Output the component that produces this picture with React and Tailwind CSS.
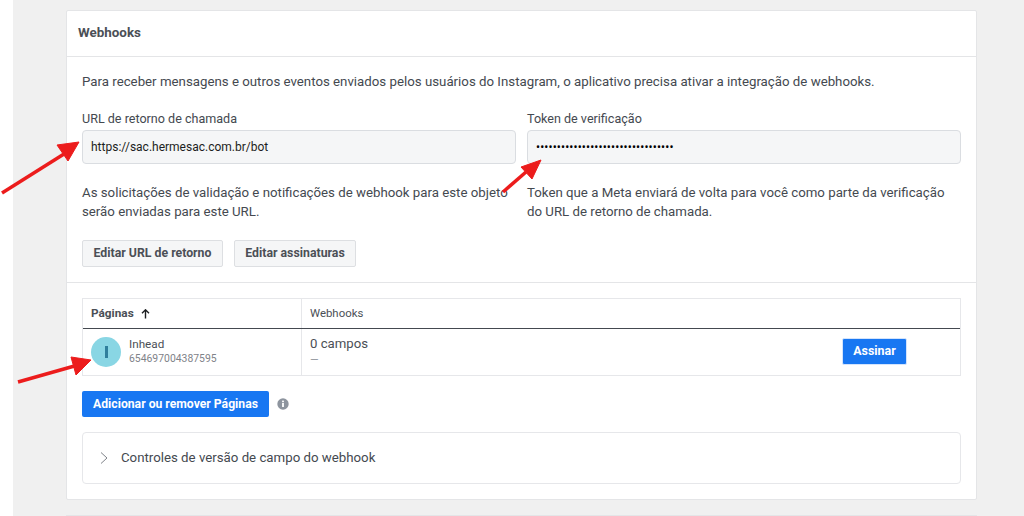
export default function App() {
  return (
    <div className="relative h-[516px] w-[1024px] overflow-hidden bg-white font-['Roboto',sans-serif]">
      <div className="ml-[13px] h-[516px] bg-[#f0f0f0] pl-[53px] pr-[47px] pt-[10px]">
        <div className="h-[490px] rounded-[2px] border border-[#e4e5e7] bg-white">
          <div className="flex h-[46px] items-center border-b border-[#e4e5e7] pb-[1px] pl-[11px] text-[13.4px] font-bold text-[#4b4f56]">Webhooks</div>
          <div className="px-[15px]">
            <p className="mt-[16px] text-[13.27px] leading-[18px] text-[#444950]">Para receber mensagens e outros eventos enviados pelos usuários do Instagram, o aplicativo precisa ativar a integração de webhooks.</p>
            <div className="mt-[19px] grid grid-cols-[434px_434px] gap-x-[11px]">
              <div>
                <label className="block text-[12.57px] leading-[18px] text-[#444950]">URL de retorno de chamada</label>
                <div className="mt-[2px] flex h-[34px] items-center rounded-[4px] border border-[#dadde1] bg-[#f5f6f7] pl-[8px] text-[12px] text-[#1c1e21]">https://sac.hermesac.com.br/bot</div>
                <p className="mt-[19px] text-[13.25px] leading-[19px] text-[#444950]">As solicitações de validação e notificações de webhook para este objeto<br />serão enviadas para este URL.</p>
              </div>
              <div>
                <label className="block text-[12.57px] leading-[18px] text-[#444950]">Token de verificação</label>
                <div className="mt-[2px] flex h-[34px] items-center rounded-[4px] border border-[#dadde1] bg-[#f5f6f7] pl-[8px] text-[12px] tracking-[0.12px] text-black">•••••••••••••••••••••••••••••••••</div>
                <p className="mt-[19px] text-[13.25px] leading-[19px] text-[#444950]">Token que a Meta enviará de volta para você como parte da verificação<br />do URL de retorno de chamada.</p>
              </div>
            </div>
            <div className="mt-[19px] flex gap-[11px]">
              <button className="h-[27px] w-[141px] rounded-[2px] border border-[#dddfe2] bg-[#f5f6f7] text-[12.3px] font-bold text-[#4b4f56]">Editar URL de retorno</button>
              <button className="h-[27px] w-[122px] rounded-[2px] border border-[#dddfe2] bg-[#f5f6f7] text-[12.3px] font-bold text-[#4b4f56]">Editar assinaturas</button>
            </div>
          </div>
          <div className="mt-[15px] border-t border-[#e4e5e7] px-[15px] pt-[15px]">
            <div className="h-[78px] border border-[#e6e7ea]">
              <div className="flex h-[30px] border-b-[1px] border-[#444950]">
                <div className="flex w-[219px] items-center gap-[7px] border-r border-[#e6e7ea] pl-[8px] text-[11.8px] font-bold text-[#4b4f56]">
                  Páginas
                  <svg width="9" height="10" viewBox="0 0 9 10" fill="none" stroke="#1c1e21" strokeWidth="1.4"><path d="M4.5 9.5V1M1 4.2l3.5-3.4L8 4.2" /></svg>
                </div>
                <div className="flex items-center pl-[8px] text-[11.4px] text-[#4b4f56]">Webhooks</div>
              </div>
              <div className="flex h-[46px]">
                <div className="flex w-[219px] items-center gap-[8px] border-r border-[#e6e7ea] pl-[8px]">
                  <div className="flex h-[30px] w-[30px] items-center justify-center rounded-full bg-[#89d6e4]">
                    <div className="h-[12px] w-[3px] bg-[#2f7f9c]" />
                  </div>
                  <div className="mb-[2px] flex flex-col">
                    <span className="text-[11.7px] leading-[15px] text-[#4b4f56]">Inhead</span>
                    <span className="text-[10.4px] leading-[14px] text-[#7f8389]">654697004387595</span>
                  </div>
                </div>
                <div className="flex flex-1 items-center justify-between pl-[8px] pr-[53px]">
                  <div className="mb-[2px] flex flex-col">
                    <span className="text-[13.2px] leading-[16px] text-[#4b4f56]">0 campos</span>
                    <span className="text-[11px] leading-[15px] text-[#90949c]">—</span>
                  </div>
                  <button className="mb-[2px] h-[27px] w-[65px] rounded-[2px] border border-[#d3e4fd] bg-[#1877f2] text-[12.4px] font-bold text-white">Assinar</button>
                </div>
              </div>
            </div>
            <div className="mt-[15px] flex items-center gap-[8px]">
              <button className="h-[26px] w-[187px] rounded-[2px] bg-[#1877f2] text-[12.2px] font-bold text-white">Adicionar ou remover Páginas</button>
              <svg width="12" height="12" viewBox="0 0 12 12"><circle cx="6" cy="6" r="5.7" fill="#8d949e" /><rect x="5.1" y="5" width="1.8" height="4" fill="#fff" /><rect x="5.1" y="2.6" width="1.8" height="1.6" fill="#fff" /></svg>
            </div>
            <div className="mt-[15px] flex h-[52px] items-center rounded-[4px] border border-[#e6e7ea] pl-[17px]">
              <svg width="9" height="14" viewBox="0 0 9 14" fill="none" stroke="#7f8389" strokeWidth="1"><path d="M1 1.5l6 5.5-6 5.5" /></svg>
              <span className="ml-[12px] text-[13.25px] text-[#444950]">Controles de versão de campo do webhook</span>
            </div>
          </div>
        </div>
        <div className="mt-[15px] h-[10px] border border-[#e4e5e7] bg-white" />
      </div>
      <svg className="absolute left-0 top-0" width="1024" height="516" viewBox="0 0 1024 516">
        <g fill="#ec1c1c" stroke="#ec1c1c">
          <path d="M2 193L64 154" strokeWidth="3.5" />
          <path d="M79 142L57 145L68 161Z" />
          <path d="M503 192L526 172" strokeWidth="3.5" />
          <path d="M541 160L521 167L532 179Z" />
          <path d="M18 382L78 365" strokeWidth="3.5" />
          <path d="M91 360L71 357L76 375Z" />
        </g>
      </svg>
    </div>
  );
}
